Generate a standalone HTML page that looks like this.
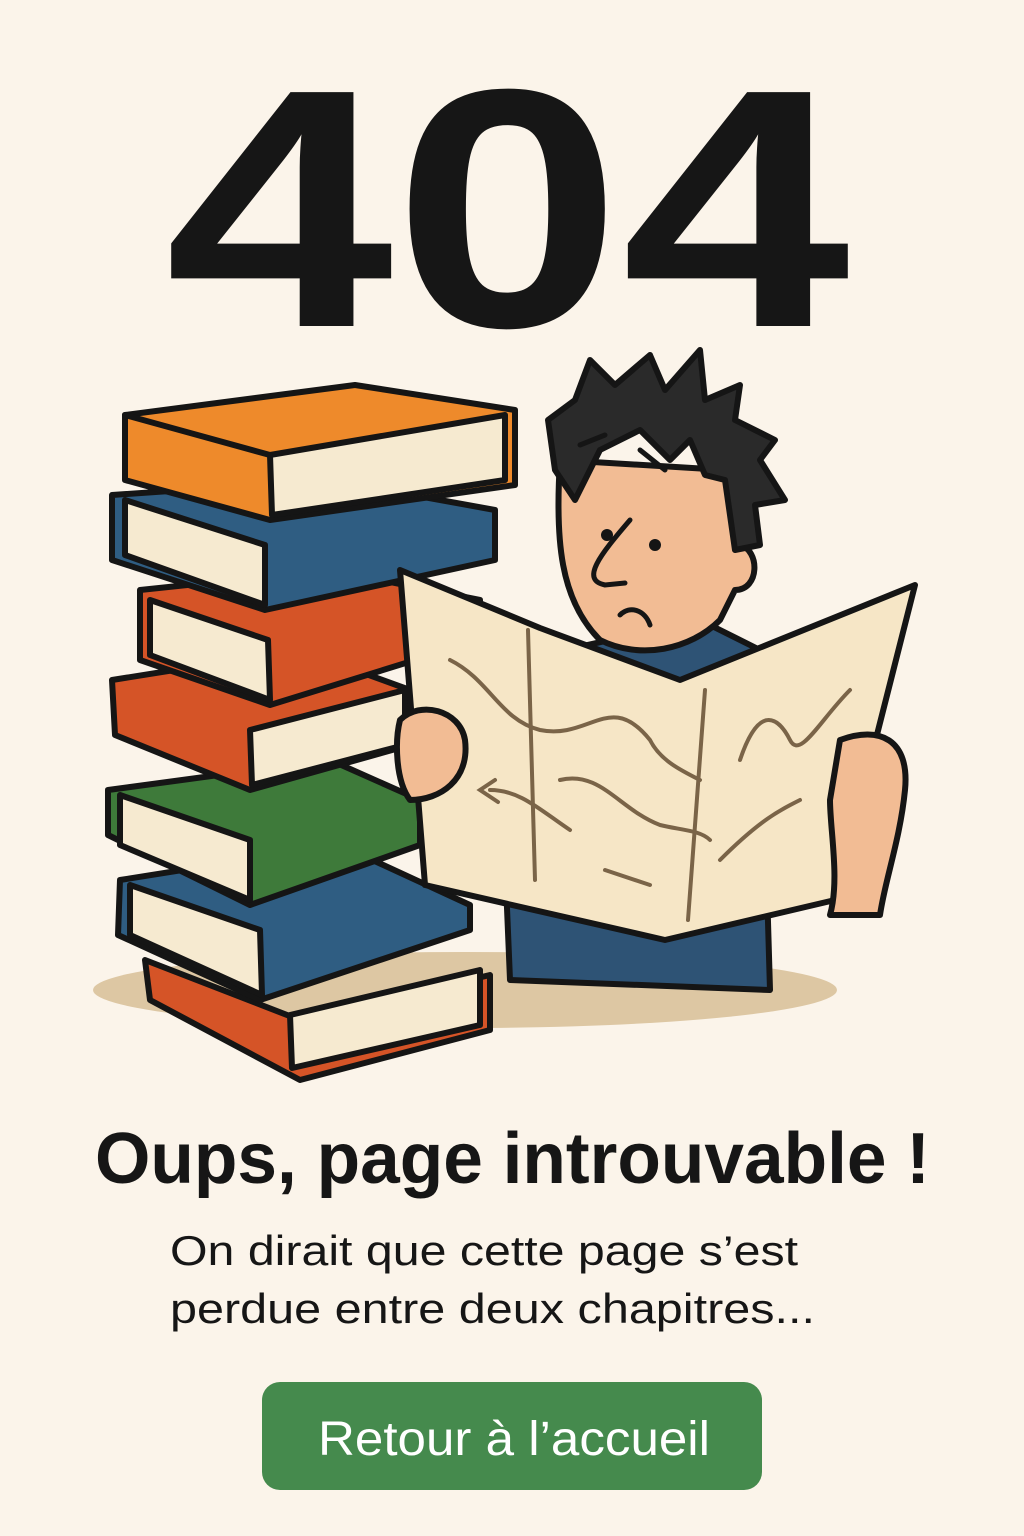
<!DOCTYPE html>
<html><head><meta charset="utf-8"><style>
html,body{margin:0;padding:0;background:#fbf4ea;}
svg{display:block}
</style></head><body>
<svg width="1024" height="1536" viewBox="0 0 1024 1536" xmlns="http://www.w3.org/2000/svg">
<rect width="1024" height="1536" fill="#fbf4ea"/>
<text x="165" y="326" font-family="Liberation Sans, sans-serif" font-weight="700" font-size="340" fill="#161616" textLength="685" lengthAdjust="spacingAndGlyphs">404</text>

<ellipse cx="465" cy="990" rx="372" ry="38" fill="#ddc7a3"/>

<g stroke="#151515" stroke-width="6" stroke-linejoin="round" stroke-linecap="round">
<polygon points="145,960 300,1020 490,975 490,1030 300,1080 150,1000" fill="#d55427"/>
<polygon points="290,1015 480,970 480,1025 292,1068" fill="#f6ead0"/>
<polygon points="120,880 340,845 470,905 470,930 260,1000 118,935" fill="#2f5d82"/>
<polygon points="130,885 260,930 262,995 130,935" fill="#f6ead0"/>
<polygon points="108,790 330,760 420,800 420,845 250,905 108,835" fill="#3e7a3a"/>
<polygon points="120,795 250,840 250,900 120,845" fill="#f6ead0"/>
<polygon points="112,680 300,650 410,690 410,745 250,790 115,735" fill="#d55427"/>
<polygon points="250,730 405,690 405,745 252,785" fill="#f6ead0"/>
<polygon points="140,590 330,570 480,600 480,640 270,705 140,660" fill="#d55427"/>
<polygon points="150,600 268,640 270,700 150,655" fill="#f6ead0"/>
<polygon points="112,495 330,480 495,510 495,560 265,610 112,560" fill="#2f5d82"/>
<polygon points="125,500 265,545 265,605 125,555" fill="#f6ead0"/>
<polygon points="125,415 355,385 515,410 515,485 270,520 125,480" fill="#ee8a2b"/>
<polygon points="270,455 505,415 505,480 272,515" fill="#f6ead0"/>
<line x1="125" y1="415" x2="270" y2="455"/>

<polygon points="505,860 520,660 700,620 760,650 770,990 510,980" fill="#2e5375"/>
<path d="M560,460 C555,540 560,600 600,640 C640,660 690,650 720,620 L735,590 C760,590 760,550 740,545 L725,470 Z" fill="#f2bc94"/>
<path d="M555,470 L548,420 L575,400 L590,360 L615,385 L650,355 L665,390 L700,350 L705,400 L740,385 L735,420 L775,440 L760,460 L785,500 L755,505 L760,545 L735,550 L725,480 L705,475 L690,440 L670,460 L640,430 L600,450 L575,500 Z" fill="#2a2a2a"/>
<polygon points="400,570 540,628 680,680 915,585 835,900 665,940 425,885" fill="#f6e6c6"/>
<path d="M400,720 C420,700 460,710 465,740 C470,780 440,800 410,800 C395,780 395,740 400,720 Z" fill="#f2bc94"/>
<path d="M840,740 C880,725 910,740 905,790 C900,840 885,880 880,915 L830,915 C840,880 830,830 830,800 Z" fill="#f2bc94"/>
</g>
<g fill="none" stroke="#151515" stroke-width="5" stroke-linecap="round">
<path d="M580,445 L605,435"/><path d="M640,450 L665,470"/>
<path d="M630,520 C600,555 580,580 605,585 L625,583"/>
<path d="M620,615 C630,605 645,610 650,625"/>
</g>
<g fill="none" stroke="#7a6448" stroke-width="4" stroke-linecap="round">
<path d="M450,660 C490,680 500,720 540,730 C590,740 610,690 650,740 C660,760 680,770 700,780"/>
<path d="M560,780 C600,770 620,810 660,825 C680,830 700,830 710,840"/>
<path d="M720,860 C760,820 780,810 800,800"/>
<path d="M740,760 C760,700 780,720 790,740 C800,760 820,720 850,690"/>
<path d="M570,830 C540,810 520,790 490,790 M495,780 L480,790 L498,802"/>
<path d="M528,630 L535,880"/><path d="M705,690 L688,920"/>
<path d="M605,870 L650,885"/>
</g>
<g fill="#151515"><circle cx="607" cy="535" r="6"/><circle cx="655" cy="545" r="6"/></g>

<text x="95" y="1183" font-family="Liberation Sans, sans-serif" font-weight="700" font-size="72" fill="#161616" textLength="835" lengthAdjust="spacingAndGlyphs">Oups, page introuvable !</text>
<text x="170" y="1265" font-family="Liberation Sans, sans-serif" font-size="42" fill="#161616" textLength="628" lengthAdjust="spacingAndGlyphs">On dirait que cette page s’est</text>
<text x="170" y="1323" font-family="Liberation Sans, sans-serif" font-size="42" fill="#161616" textLength="645" lengthAdjust="spacingAndGlyphs">perdue entre deux chapitres...</text>
<rect x="262" y="1382" width="500" height="108" rx="18" fill="#458a4d"/>
<text x="318" y="1455" font-family="Liberation Sans, sans-serif" font-size="48" fill="#ffffff" textLength="392" lengthAdjust="spacingAndGlyphs">Retour à l’accueil</text>
</svg>
</body></html>
